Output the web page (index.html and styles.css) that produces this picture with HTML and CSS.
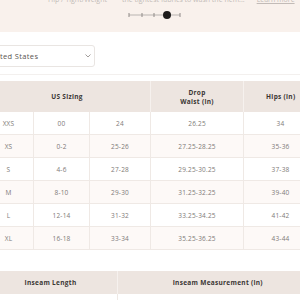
FILE: index.html
```html
<!DOCTYPE html>
<html lang="en">
<head>
    <meta charset="UTF-8">
    <meta name="viewport" content="width=device-width, initial-scale=1.0">
    <title>Size Guide</title>
    <link rel="stylesheet" href="styles.css">
</head>
<body>
    <div class="page">
        <!-- Полоса с подсказкой и слайдером -->
        <div class="fit-band">
            <div class="fit-notes">
                <span class="note note-left">Hip / Tight/Weight</span>
                <span class="note note-mid">the tightest fabrics to wash the hem...</span>
                <a class="note note-link" href="#">Learn more</a>
            </div>
            <div class="fit-slider">
                <svg width="54" height="10" viewBox="0 0 54 10">
                    <line x1="1" y1="5" x2="52" y2="5" stroke="#b9b4b1" stroke-width="1"/>
                    <line x1="1" y1="3" x2="1" y2="7" stroke="#8f8a87" stroke-width="1"/>
                    <line x1="14" y1="3" x2="14" y2="7" stroke="#8f8a87" stroke-width="1"/>
                    <line x1="26" y1="3" x2="26" y2="7" stroke="#8f8a87" stroke-width="1"/>
                    <line x1="52" y1="3" x2="52" y2="7" stroke="#8f8a87" stroke-width="1"/>
                    <circle cx="39" cy="5" r="4" fill="#1d1b1a"/>
                </svg>
            </div>
        </div>

        <div class="content">
            <div class="country">
                <div class="select-box">
                    <select class="country-select">
                        <option>United States</option>
                    </select>
                    <svg class="chevron" width="6" height="4" viewBox="0 0 6 4">
                        <polyline points="0.5,0.5 3,3 5.5,0.5" fill="none" stroke="#8a8481" stroke-width="0.8"/>
                    </svg>
                </div>
            </div>

            <div class="table-wrap">
                <table class="size-table">
                    <colgroup>
                        <col style="width:50px">
                        <col style="width:56px">
                        <col style="width:61px">
                        <col style="width:93px">
                        <col style="width:74px">
                    </colgroup>
                    <thead>
                        <tr>
                            <th colspan="3">US Sizing</th>
                            <th>Drop<br>Waist (in)</th>
                            <th>Hips (in)</th>
                        </tr>
                    </thead>
                    <tbody>
                        <tr><td>XXS</td><td>00</td><td>24</td><td>26.25</td><td>34</td></tr>
                        <tr><td>XS</td><td>0-2</td><td>25-26</td><td>27.25-28.25</td><td>35-36</td></tr>
                        <tr><td>S</td><td>4-6</td><td>27-28</td><td>29.25-30.25</td><td>37-38</td></tr>
                        <tr><td>M</td><td>8-10</td><td>29-30</td><td>31.25-32.25</td><td>39-40</td></tr>
                        <tr><td>L</td><td>12-14</td><td>31-32</td><td>33.25-34.25</td><td>41-42</td></tr>
                        <tr><td>XL</td><td>16-18</td><td>33-34</td><td>35.25-36.25</td><td>43-44</td></tr>
                    </tbody>
                </table>
            </div>

            <table class="size-table inseam-table">
                <colgroup>
                    <col style="width:134px">
                    <col style="width:200px">
                </colgroup>
                <thead>
                    <tr>
                        <th>Inseam Length</th>
                        <th>Inseam Measurement (in)</th>
                    </tr>
                </thead>
                <tbody>
                    <tr><td>Petite</td><td>28</td></tr>
                    <tr><td>Regular</td><td>30</td></tr>
                </tbody>
            </table>
        </div>
    </div>
</body>
</html>
```

FILE: styles.css
```css
/* Общие стили */
body {
    margin: 0;
    font-family: "Open Sans", "Liberation Sans", sans-serif;
    color: #4a4644;
    background: #ffffff;
    overflow: hidden;
}

.page {
    margin-left: -17px;
    width: 334px;
}

/* Верхняя полоса */
.fit-band {
    background: #f9f1ec;
    height: 32px;
    padding-left: 17px;
    overflow: hidden;
}

.fit-notes {
    display: flex;
    height: 4px;
    align-items: flex-end;
    font-size: 7px;
    line-height: 9px;
    color: #c2bbb7;
    white-space: nowrap;
}

.note-left {
    margin-left: 48px;
}

.note-mid {
    margin-left: 15px;
}

.note-link {
    margin-left: 12px;
    color: #c2bbb7;
    text-decoration: underline;
}

.fit-slider {
    display: flex;
    padding-top: 6px;
    padding-left: 128px;
}

/* Выбор страны */
.content {
    padding-top: 13px;
}

.country {
    padding-bottom: 7px;
    border-bottom: 1px solid #f3f0ee;
    margin-bottom: 6px;
}

.select-box {
    position: relative;
    width: 112px;
}

.country-select {
    display: block;
    width: 112px;
    height: 22px;
    padding: 0 6px 0 3px;
    font-family: "Open Sans", "Liberation Sans", sans-serif;
    font-size: 7.5px;
    letter-spacing: 0.35px;
    color: #5a5552;
    background: #ffffff;
    border: 1px solid #e9e5e2;
    border-radius: 3px;
    appearance: none;
    -webkit-appearance: none;
}

.chevron {
    position: absolute;
    right: 4px;
    top: 9px;
}

/* Таблицы размеров */
.size-table {
    width: 334px;
    border-collapse: collapse;
    table-layout: fixed;
    text-align: center;
}

.size-table th {
    background: #ede5e0;
    font-size: 6.5px;
    font-weight: 700;
    letter-spacing: 0.3px;
    line-height: 9px;
    color: #3a3634;
    height: 31px;
    padding: 0;
    border-left: 1px solid #f6f1ee;
}

.size-table td {
    height: 22px;
    padding: 0;
    font-size: 6.5px;
    letter-spacing: 0.2px;
    color: #807a77;
    border: 1px solid #efe9e5;
    border-top: none;
}

.size-table tbody tr:nth-child(even) td {
    background: #fdf9f7;
}

.inseam-table {
    margin-top: 21px;
}

.inseam-table th {
    height: 23px;
}
```
